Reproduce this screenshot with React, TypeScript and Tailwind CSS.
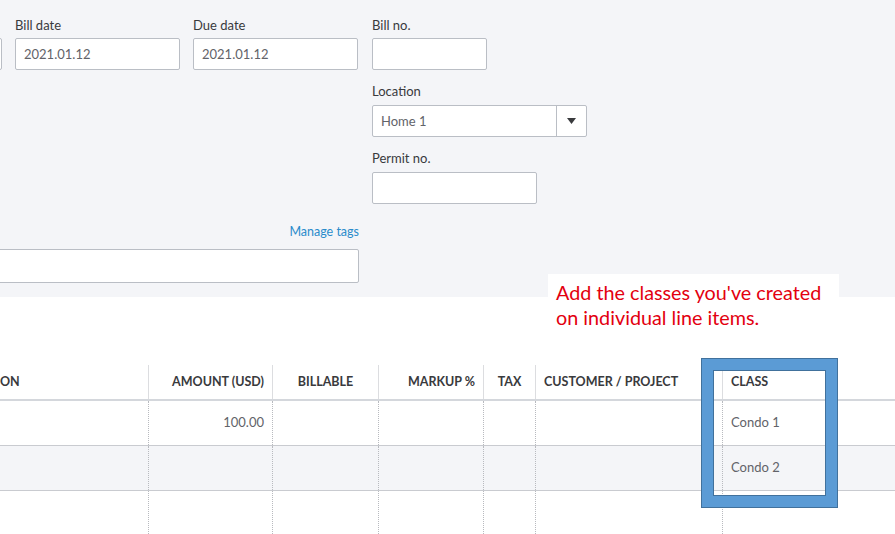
import React from "react";

const font = { fontFamily: "Lato, 'Open Sans', 'Noto Sans', sans-serif" };

function Field({ label, value, className }: { label: string; value?: string; className: string }) {
  return (
    <div className={className}>
      <div className="h-[16px] text-[13px] leading-[16px] text-[#393a3d]">{label}</div>
      <div className="mt-[5px] flex h-[32px] items-center rounded-[2px] border border-[#babec5] bg-white px-[8px] pt-[1px] text-[13px] text-[#626369]">
        {value}
      </div>
    </div>
  );
}

const cols = [
  { key: "desc", label: "ON", w: "w-[149px]", align: "text-left pl-0" },
  { key: "amount", label: "AMOUNT (USD)", w: "w-[124px]", align: "text-right pr-[8px]" },
  { key: "billable", label: "BILLABLE", w: "w-[106px]", align: "text-center" },
  { key: "markup", label: "MARKUP %", w: "w-[105px]", align: "text-right pr-[8px]" },
  { key: "tax", label: "TAX", w: "w-[52px]", align: "text-center" },
  { key: "customer", label: "CUSTOMER / PROJECT", w: "w-[187px]", align: "text-left pl-[8px]" },
  { key: "class", label: "CLASS", w: "flex-1", align: "text-left pl-[8px]" },
];

const rows: Record<string, string>[] = [
  { amount: "100.00", class: "Condo 1" },
  { class: "Condo 2" },
  {},
];

export default function App() {
  return (
    <div className="relative h-[534px] w-[895px] overflow-hidden bg-white" style={font}>
      {/* bill header form */}
      <div className="flex h-[297px] bg-[#f4f5f8] pt-[17px]">
        <div className="flex w-[359px] flex-col">
          <div className="flex gap-[13px]">
            <Field label="" className="ml-[-163px] w-[165px] shrink-0" />
            <Field label="Bill date" value="2021.01.12" className="w-[165px] shrink-0" />
            <Field label="Due date" value="2021.01.12" className="w-[165px] shrink-0" />
          </div>
          <div className="mt-[154px] h-[16px] text-right text-[12.5px] leading-[16px] text-[#2a8bcb]">
            Manage tags
          </div>
          <div className="mt-[9px] ml-[-10px] h-[34px] rounded-[2px] border border-[#babec5] bg-white" />
        </div>

        <div className="ml-[13px] flex flex-col">
          <Field label="Bill no." className="w-[115px]" />
          <div className="mt-[13px]">
            <div className="h-[16px] text-[13px] leading-[16px] text-[#393a3d]">Location</div>
            <div className="mt-[6px] flex h-[32px] w-[215px] rounded-[2px] border border-[#babec5] bg-white text-[13px] text-[#626369]">
              <div className="flex flex-1 items-center px-[8px] pt-[1px]">Home 1</div>
              <div className="flex w-[30px] items-center justify-center border-l border-[#babec5]">
                <svg width="9" height="6" viewBox="0 0 9 6">
                  <path d="M0 0h9L4.5 6z" fill="#393a3d" />
                </svg>
              </div>
            </div>
          </div>
          <div className="mt-[13px]">
            <div className="h-[16px] text-[13px] leading-[16px] text-[#393a3d]">Permit no.</div>
            <div className="mt-[6px] h-[32px] w-[165px] rounded-[2px] border border-[#babec5] bg-white" />
          </div>
        </div>
      </div>

      {/* line items table */}
      <div className="mt-[68px]">
        <div className="flex h-[36px] border-b-2 border-[#d4d7dc]">
          {cols.map((c, i) => (
            <div
              key={c.key}
              className={`${c.w} ${c.align} shrink-0 text-[12.5px] font-bold leading-[33px] text-[#393a3d] ${
                i < cols.length - 1 ? "border-r border-[#dcdde0]" : ""
              }`}
            >
              {c.label}
            </div>
          ))}
        </div>
        {rows.map((r, ri) => (
          <div
            key={ri}
            className={`flex h-[45px] ${ri < 2 ? "border-b border-[#c9cbd0]" : ""} ${
              ri === 1 ? "bg-[#f4f5f8]" : "bg-white"
            }`}
          >
            {cols.map((c, i) => (
              <div
                key={c.key}
                className={`${c.w} ${c.align} shrink-0 text-[13px] leading-[43px] text-[#626369] ${
                  i < cols.length - 1 ? "border-r border-dotted border-[#b8babf]" : ""
                }`}
              >
                {c.key === "desc" ? "" : r[c.key] ?? ""}
              </div>
            ))}
          </div>
        ))}
      </div>

      {/* callout note */}
      <div
        className="absolute left-[548px] top-[274px] w-[291px] bg-white px-[8px] pt-[6px] text-[19.8px] leading-[25px] text-[#e3000f]"
        style={{ fontFamily: "Lato, 'Noto Sans', sans-serif" }}
      >
        Add the classes you've created
        <br />
        on individual line items.
      </div>

      {/* highlight frame around the class column */}
      <div className="absolute left-[702px] top-[359px] h-[148px] w-[135px] border-[11px] border-[#5b9bd5] shadow-[0_0_0_1px_#41719c,inset_0_0_0_1px_#41719c]" />
    </div>
  );
}
